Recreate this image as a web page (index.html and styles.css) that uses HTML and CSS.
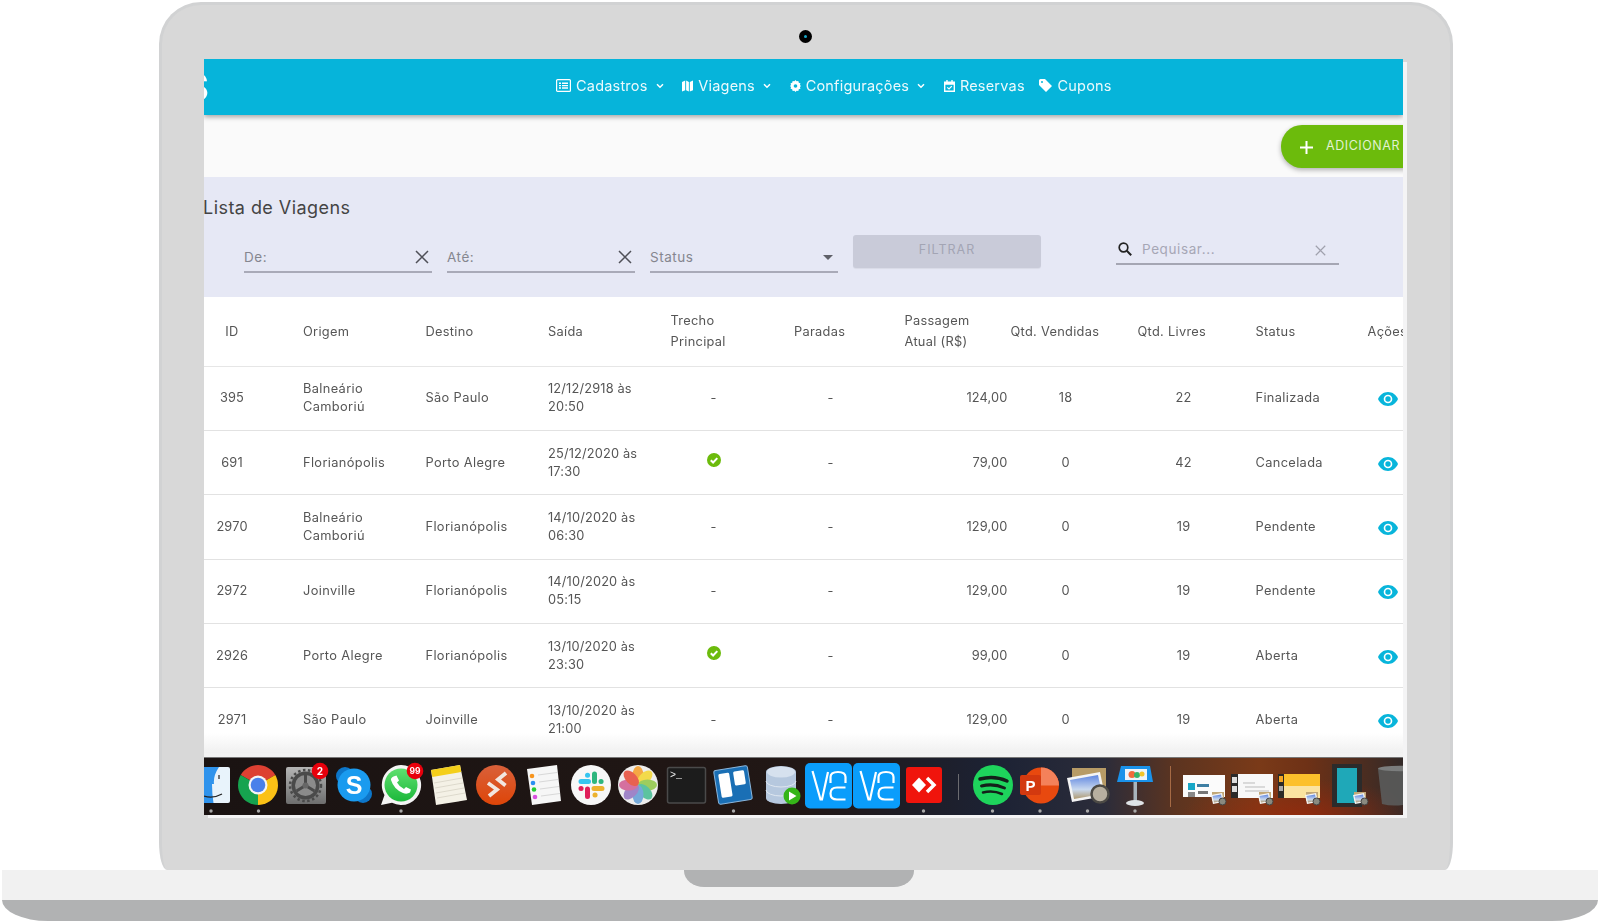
FILE: index.html
```html
<!DOCTYPE html>
<html lang="pt-BR">
<head>
<meta charset="utf-8">
<title>Lista de Viagens</title>
<link rel="stylesheet" href="styles.css">
</head>
<body>
<svg class="defs" width="0" height="0" aria-hidden="true">
  <defs>
    <symbol id="i-eye" viewBox="0 0 20 14"><path fill="currentColor" d="M10 0C5.5 0 1.8 2.8 0 7c1.8 4.200 5.500 7 10 7s8.200-2.800 10-7c-1.800-4.200-5.500-7-10-7z"/><circle cx="10" cy="7" r="4.300" fill="#fff"/><circle cx="10" cy="7" r="2.700" fill="currentColor"/></symbol>
    <symbol id="i-check" viewBox="0 0 14 14"><circle cx="7" cy="7" r="7" fill="#6cbb0c"/><path d="M3.800 7.200l2.300 2.300 4.200-4.400" fill="none" stroke="#fff" stroke-width="2"/></symbol>
    <symbol id="i-x" viewBox="0 0 14 14"><path d="M1 1l12 12M13 1L1 13" fill="none" stroke="currentColor" stroke-width="1.500"/></symbol>
    <symbol id="i-chev" viewBox="0 0 8 6"><path d="M1 1.200l3 3 3-3" fill="none" stroke="currentColor" stroke-width="1.500"/></symbol>
  </defs>
</svg>
<div class="laptop">
  <div class="lid">
    <div class="camera"><span class="lens"></span></div>
    <div class="app">
      <header class="topbar">
        <span class="logo">S</span>
        <nav class="nav">
          <a class="nav-item"><svg class="nav-ic wide" viewBox="0 0 15 13"><rect x=".6" y=".6" width="13.800" height="11.800" rx="1" fill="none" stroke="currentColor" stroke-width="1.200"/><path d="M3 3.500h2v1.400H3zM6 3.500h6v1.400H6zM3 5.900h2v1.400H3zM6 5.900h6v1.400H6zM3 8.300h2v1.400H3zM6 8.300h6v1.400H6z" fill="currentColor"/></svg>Cadastros<svg class="chev"><use href="#i-chev"/></svg></a>
          <a class="nav-item"><svg class="nav-ic" viewBox="0 0 12 13"><path d="M0 2l3.500-1.500V11L0 12.500zM4.500.5L7.500 2v10.500L4.500 11zM8.500 2L12 .5V11l-3.500 1.500z" fill="currentColor"/></svg>Viagens<svg class="chev"><use href="#i-chev"/></svg></a>
          <a class="nav-item"><svg class="nav-ic" viewBox="0 0 12 13"><path d="M6 0l1.200 1.400 1.900-.3.500 1.800 1.800.7-.5 1.800L12 6.500l-1.100 1.100.5 1.800-1.800.7-.5 1.800-1.900-.3L6 13l-1.200-1.400-1.900.3-.5-1.800-1.800-.7.500-1.800L0 6.500l1.100-1.100-.5-1.800 1.800-.7.5-1.800 1.900.3z" fill="currentColor"/><circle cx="6" cy="6.500" r="2" fill="#06b4da"/></svg>Configurações<svg class="chev"><use href="#i-chev"/></svg></a>
          <a class="nav-item"><svg class="nav-ic" viewBox="0 0 12 13"><path d="M2.500 0h1.500v1.500h4V0h1.500v1.500H12V13H0V1.500h2.500zM1.500 5v6.500h9V5z" fill="currentColor"/><path d="M3.500 8l2 1.800 3-3.200" fill="none" stroke="currentColor" stroke-width="1.300"/></svg>Reservas</a>
          <a class="nav-item tight"><svg class="nav-ic tag" viewBox="0 0 13 13"><path d="M0 1.500A1.500 1.500 0 0 1 1.500 0H6l7 7-6 6-7-7z" fill="currentColor"/><circle cx="3" cy="3" r="1" fill="#06b4da"/></svg>Cupons</a>
        </nav>
      </header>

      <div class="actions">
        <button class="fab"><svg class="plus" viewBox="0 0 13 13"><path d="M6.500 0v13M0 6.500h13" stroke="#fff" stroke-width="2"/></svg>ADICIONAR</button>
      </div>

      <section class="filters">
        <h1 class="title">Lista de Viagens</h1>
        <div class="filter-row">
          <label class="field"><span>De:</span><svg class="x"><use href="#i-x"/></svg></label>
          <label class="field"><span>Até:</span><svg class="x"><use href="#i-x"/></svg></label>
          <label class="field"><span>Status</span><i class="caret"></i></label>
          <button class="filter-btn">FILTRAR</button>
          <label class="search">
            <svg class="lens-ic" viewBox="0 0 14 14"><circle cx="5.500" cy="5.500" r="4.300" fill="none" stroke="#222" stroke-width="1.700"/><path d="M8.800 8.800l4.400 4.400" stroke="#222" stroke-width="2"/></svg>
            <span>Pequisar...</span>
            <svg class="x small"><use href="#i-x"/></svg>
          </label>
        </div>
      </section>

      <div class="table-wrap">
        <table class="grid">
          <colgroup><col class="c-id"><col class="c-txt"><col class="c-txt"><col class="c-txt"><col class="c-tr"><col class="c-par"><col class="c-val"><col class="c-ven"><col class="c-liv"><col class="c-st"><col class="c-ac"></colgroup>
          <thead>
            <tr>
              <th class="ctr">ID</th><th>Origem</th><th>Destino</th><th>Saída</th><th>Trecho<br>Principal</th>
              <th class="h-par">Paradas</th><th class="h-val">Passagem<br>Atual (R$)</th><th>Qtd. Vendidas</th><th class="h-liv">Qtd. Livres</th><th class="h-st">Status</th><th class="h-ac">Ações</th>
            </tr>
          </thead>
          <tbody>
            <tr><td class="ctr dig">395</td><td>Balneário<br>Camboriú</td><td>São Paulo</td><td class="dig">12/12/2918 às<br>20:50</td><td class="mid">-</td><td class="mid">-</td><td class="num dig">124,00</td><td class="mid dig">18</td><td class="mid dig">22</td><td class="st">Finalizada</td><td class="mid"><svg class="eye"><use href="#i-eye"/></svg></td></tr>
            <tr><td class="ctr dig">691</td><td>Florianópolis</td><td>Porto Alegre</td><td class="dig">25/12/2020 às<br>17:30</td><td class="mid"><svg class="ok"><use href="#i-check"/></svg></td><td class="mid">-</td><td class="num dig">79,00</td><td class="mid dig">0</td><td class="mid dig">42</td><td class="st">Cancelada</td><td class="mid"><svg class="eye"><use href="#i-eye"/></svg></td></tr>
            <tr><td class="ctr dig">2970</td><td>Balneário<br>Camboriú</td><td>Florianópolis</td><td class="dig">14/10/2020 às<br>06:30</td><td class="mid">-</td><td class="mid">-</td><td class="num dig">129,00</td><td class="mid dig">0</td><td class="mid dig">19</td><td class="st">Pendente</td><td class="mid"><svg class="eye"><use href="#i-eye"/></svg></td></tr>
            <tr><td class="ctr dig">2972</td><td>Joinville</td><td>Florianópolis</td><td class="dig">14/10/2020 às<br>05:15</td><td class="mid">-</td><td class="mid">-</td><td class="num dig">129,00</td><td class="mid dig">0</td><td class="mid dig">19</td><td class="st">Pendente</td><td class="mid"><svg class="eye"><use href="#i-eye"/></svg></td></tr>
            <tr><td class="ctr dig">2926</td><td>Porto Alegre</td><td>Florianópolis</td><td class="dig">13/10/2020 às<br>23:30</td><td class="mid"><svg class="ok"><use href="#i-check"/></svg></td><td class="mid">-</td><td class="num dig">99,00</td><td class="mid dig">0</td><td class="mid dig">19</td><td class="st">Aberta</td><td class="mid"><svg class="eye"><use href="#i-eye"/></svg></td></tr>
            <tr><td class="ctr dig">2971</td><td>São Paulo</td><td>Joinville</td><td class="dig">13/10/2020 às<br>21:00</td><td class="mid">-</td><td class="mid">-</td><td class="num dig">129,00</td><td class="mid dig">0</td><td class="mid dig">19</td><td class="st">Aberta</td><td class="mid"><svg class="eye"><use href="#i-eye"/></svg></td></tr>
          </tbody>
        </table>
      </div>

      <div class="dock">
        <svg class="dock-art" viewBox="204 758 1199 57" width="1199" height="57">
          <defs>
            <linearGradient id="g-set" x1="0" y1="0" x2="0" y2="1"><stop offset="0" stop-color="#b5b5b5"/><stop offset="1" stop-color="#6e6e6e"/></linearGradient>
            <linearGradient id="g-wa" x1="0" y1="0" x2="0" y2="1"><stop offset="0" stop-color="#5fe070"/><stop offset="1" stop-color="#1cb83a"/></linearGradient>
            <linearGradient id="g-or" x1="0" y1="0" x2="0" y2="1"><stop offset="0" stop-color="#d9603a"/><stop offset="1" stop-color="#de4508"/></linearGradient>
            <linearGradient id="g-sky" x1="0" y1="0" x2="0" y2="1"><stop offset="0" stop-color="#5f86e0"/><stop offset=".6" stop-color="#c8d8ef"/><stop offset="1" stop-color="#b09a70"/></linearGradient>
            <g id="mini">
              <rect x="1" y="0" width="12" height="9" fill="#c2a878"/>
              <path d="M0 3l11-2 2 9-11 2z" fill="#f4f4f4"/>
              <path d="M1.500 4l8.500-1.500 1.500 6.500-8.500 1.500z" fill="url(#g-sky)"/>
              <circle cx="11.500" cy="9.500" r="3.500" fill="#8a8a80" stroke="#444"/>
            </g>
            <g id="vnc" fill="none" stroke="#fff" stroke-width="2.200">
              <rect x="805" y="763" width="47" height="45.500" rx="5" fill="#0a9dfb" stroke="none"/>
              <path d="M812.500 771l8 28.500h1.500L828 772"/>
              <path d="M830.500 783v-6q0-5 7.500-5t7.500 5v6"/>
              <path d="M845.500 787.500H837q-6.500 0-6.500 6t6.500 6h8.500"/>
            </g>
          </defs>
          <!-- Finder -->
          <rect x="200" y="767" width="30" height="36" rx="2" fill="#e8f3fb"/>
          <path d="M200 767h19q-6 9-5 17h-2q0 10 1.500 19H200z" fill="#2f93ec"/>
          <path d="M219 775v4M204 796q9 3 18-2" fill="none" stroke="#222" stroke-width="1.200"/>
          <!-- Chrome -->
          <path d="M258 785L240.700 775A20 20 0 0 1 275.300 775z" fill="#dd4032"/>
          <path d="M258 785L275.300 775A20 20 0 0 1 258 805z" fill="#fbc116"/>
          <path d="M258 785L258 805A20 20 0 0 1 240.700 775z" fill="#16a34f"/>
          <circle cx="258" cy="785" r="9.500" fill="#f5f5f5"/><circle cx="258" cy="785" r="7.300" fill="#4a80ea"/>
          <!-- System settings -->
          <rect x="286" y="767" width="40" height="37" rx="2" fill="url(#g-set)"/>
          <circle cx="305.500" cy="785.500" r="14" fill="#4a4a4a"/>
          <circle cx="305.500" cy="785.500" r="15.500" fill="none" stroke="#4a4a4a" stroke-width="2.500" stroke-dasharray="2.500 2.500"/>
          <circle cx="305.500" cy="785.500" r="10.500" fill="#8b8b8b"/>
          <path d="M305.500 785.500V775M305.500 785.500l-9 5.500M305.500 785.500l9 5.500" stroke="#4a4a4a" stroke-width="3"/>
          <circle cx="305.500" cy="785.500" r="3" fill="#666"/>
          <circle cx="320" cy="771" r="8.300" fill="#e8000c"/>
          <text class="badge" x="320" y="774.500">2</text>
          <!-- Skype -->
          <circle cx="345" cy="776" r="9" fill="#0d76c9"/><circle cx="363" cy="794" r="9" fill="#0d76c9"/>
          <circle cx="354" cy="785" r="16.500" fill="#1a9bef"/>
          <text class="skype" x="354" y="794">S</text>
          <!-- WhatsApp -->
          <path d="M401 765a20 20 0 1 1-9 37.800L381 805l3.500-10A20 20 0 0 1 401 765z" fill="#f4f4f4"/>
          <circle cx="401" cy="785" r="16.500" fill="url(#g-wa)"/>
          <path d="M393.500 776.500l3-1 2.500 5-2 2q2.500 4.500 7 6.500l2-2 5 2.500-1 3q-3 2-7 .5-9-3.500-12-13-.5-2 2.500-3.500z" fill="#fff"/>
          <circle cx="415" cy="771" r="8.300" fill="#e8000c"/>
          <text class="badge small" x="415" y="774">99</text>
          <!-- Notes -->
          <path d="M431 770l29-5 7 35-31 5z" fill="#f4f1e6"/>
          <path d="M431 770l29-5 1.300 7-29 5z" fill="#f4cf1a"/>
          <path d="M434 783l28-5M435 788l28-5M436 793l28-5M437 798l28-5" stroke="#ddd9cc"/>
          <!-- Remote desktop -->
          <circle cx="496" cy="785" r="20" fill="url(#g-or)"/>
          <path d="M488 783l9 6.500-8 6.500M506 773l-8 6.500 7.500 6" fill="none" stroke="#f2e6e0" stroke-width="3.800"/>
          <!-- Reminders -->
          <path d="M527 769l30-4 4 36-29 4z" fill="#f6f6f6"/>
          <path d="M538 775l19-2.500M539 782l19-2.500M540 789l19-2.500M541 796l19-2.500" stroke="#d8d8d8"/>
          <circle cx="532" cy="776" r="2.300" fill="#f7941d"/><circle cx="533" cy="783" r="2.300" fill="#2a8ff0"/><circle cx="534" cy="789.500" r="2.300" fill="#22cc33"/><circle cx="535" cy="797" r="2.300" fill="#d84fe0"/>
          <!-- Slack -->
          <circle cx="591" cy="785" r="20" fill="#f7f7f7"/>
          <g fill="none" stroke-width="5" stroke-linecap="round">
            <path d="M581 781.500h7.500M587.500 775.200h.1" stroke="#36c5f0"/>
            <path d="M594.500 774v7.500M601 781.500h.1" stroke="#2eb67d"/>
            <path d="M594 788.500h8M595 795h.1" stroke="#ecb22e"/>
            <path d="M587.500 789v7.500M581 788.500h.1" stroke="#e01e5a"/>
          </g>
          <!-- Photos -->
          <circle cx="638" cy="785" r="20" fill="#ededed"/>
          <g class="petals">
            <ellipse cx="638" cy="775.500" rx="5.500" ry="9.500" fill="#f79a1f"/>
            <ellipse cx="638" cy="775.500" rx="5.500" ry="9.500" fill="#f5d628" transform="rotate(45 638 785)"/>
            <ellipse cx="638" cy="775.500" rx="5.500" ry="9.500" fill="#8cc63f" transform="rotate(90 638 785)"/>
            <ellipse cx="638" cy="775.500" rx="5.500" ry="9.500" fill="#3dbb8f" transform="rotate(135 638 785)"/>
            <ellipse cx="638" cy="775.500" rx="5.500" ry="9.500" fill="#5b9bd5" transform="rotate(180 638 785)"/>
            <ellipse cx="638" cy="775.500" rx="5.500" ry="9.500" fill="#8e6fc0" transform="rotate(225 638 785)"/>
            <ellipse cx="638" cy="775.500" rx="5.500" ry="9.500" fill="#d0558f" transform="rotate(270 638 785)"/>
            <ellipse cx="638" cy="775.500" rx="5.500" ry="9.500" fill="#e8432e" transform="rotate(315 638 785)"/>
          </g>
          <!-- Terminal -->
          <rect x="667.500" y="767.500" width="38" height="35.500" rx="2" fill="#1c1c1c" stroke="#4a4a4a" stroke-width="1.500"/>
          <text class="term" x="670" y="778">&gt;_</text>
          <!-- Trello -->
          <g transform="rotate(-9 733 785)">
            <rect x="716" y="768" width="34" height="34" rx="2" fill="#1a6fb5" stroke="#8ab6dc"/>
            <rect x="720" y="772" width="11" height="24" rx="1.500" fill="#fff"/>
            <rect x="735" y="772" width="11" height="14" rx="1.500" fill="#fff"/>
          </g>
          <!-- Database -->
          <path d="M766 772a15 6 0 0 1 30 0v26a15 6 0 0 1-30 0z" fill="#b6c8de"/>
          <path d="M766 781a15 6 0 0 0 30 0M766 790a15 6 0 0 0 30 0" fill="none" stroke="#dfe7f0"/>
          <ellipse cx="781" cy="772" rx="14" ry="5.500" fill="#d6e1ee"/>
          <circle cx="792" cy="796" r="8.500" fill="#35b518"/>
          <path d="M789 791.500l7.500 4.500-7.500 4.500z" fill="#fff"/>
          <!-- VNC -->
          <use href="#vnc"/><use href="#vnc" x="48"/>
          <!-- AnyDesk -->
          <rect x="906" y="767" width="36" height="36" rx="3" fill="#f0140c"/>
          <path d="M919 777.500l7 7.500-7 7.500-7-7.500z" fill="#fff"/>
          <path d="M927 778l7 7-7 7" fill="none" stroke="#fff" stroke-width="3.500"/>
          <path d="M958.500 774v26" stroke="#6b6b70"/>
          <!-- Spotify -->
          <circle cx="993" cy="785" r="20" fill="#1ed45c"/>
          <path d="M980 779q14-4 27 2" fill="none" stroke="#14201a" stroke-width="3.500" stroke-linecap="round"/>
          <path d="M981.500 786q12-3 23 2" fill="none" stroke="#14201a" stroke-width="3" stroke-linecap="round"/>
          <path d="M983 792.500q10-2.500 19 1.500" fill="none" stroke="#14201a" stroke-width="2.500" stroke-linecap="round"/>
          <!-- PowerPoint -->
          <circle cx="1041" cy="785.500" r="18" fill="#e8490f"/>
          <path d="M1041 785.500v-18a18 18 0 0 1 18 18z" fill="#f4815a"/>
          <rect x="1020" y="775" width="21" height="20" rx="2" fill="#d3390f"/>
          <text class="ppt" x="1030.500" y="791">P</text>
          <!-- Preview -->
          <rect x="1072" y="768" width="34" height="27" fill="#b79b66"/>
          <path d="M1067 778l33-6 5 24-33 6z" fill="#f4f4f4"/>
          <path d="M1070 780l28-5 4 19-28 5z" fill="url(#g-sky)"/>
          <circle cx="1100" cy="794" r="8.500" fill="#b8b0a0" stroke="#4c4a45" stroke-width="2.500"/>
          <!-- Keynote -->
          <path d="M1121 766h29l3 16h-36z" fill="#1a92ea"/>
          <rect x="1125" y="769" width="22" height="11" fill="#eef4fb"/>
          <circle cx="1132" cy="774.500" r="3.500" fill="#f06a3c"/><circle cx="1137" cy="775" r="3" fill="#36b26b"/><circle cx="1142" cy="774" r="2.500" fill="#f4c52b"/>
          <rect x="1133.500" y="782" width="3.500" height="19" fill="#a8b4bc"/>
          <ellipse cx="1135" cy="803" rx="9" ry="3" fill="#dfe3e6"/>
          <path d="M1170.500 766v41" stroke="#a66a44"/>
          <!-- Thumbnails -->
          <rect x="1183" y="775" width="42" height="22" fill="#fbfbfb"/>
          <rect x="1188" y="783" width="7" height="7" fill="#17a7c7"/><rect x="1188" y="792" width="7" height="5" fill="#888"/>
          <rect x="1197" y="784" width="12" height="3" fill="#3f7fa3"/><rect x="1198" y="791" width="10" height="3" fill="#777"/>
          <use href="#mini" x="1211" y="792"/>
          <rect x="1231" y="774" width="42" height="24" fill="#f8f8f8"/><rect x="1231" y="774" width="7" height="24" fill="#2a2a2a"/>
          <rect x="1232" y="777" width="5" height="6" fill="#ddd"/><rect x="1232" y="786" width="5" height="6" fill="#ddd"/>
          <path d="M1243 783h12M1245 787h20M1245 791h24" stroke="#bbb"/>
          <use href="#mini" x="1258" y="792"/>
          <rect x="1278" y="774" width="42" height="24" fill="#fcc02b"/><rect x="1278" y="774" width="6" height="24" fill="#2c2a26"/>
          <rect x="1279" y="776" width="4" height="6" fill="#f5a623"/><rect x="1279" y="786" width="4" height="5" fill="#aaa"/>
          <path d="M1284 786l36 0v12h-36z" fill="#fbe3a0"/>
          <use href="#mini" x="1305" y="792"/>
          <rect x="1332" y="764" width="30" height="43" fill="#2b2b2b"/>
          <rect x="1337" y="768" width="20" height="35" fill="#1fa8b8"/>
          <use href="#mini" x="1353" y="792"/>
          <!-- Trash -->
          <path d="M1378 769l4 35q12 3 26 0v-35z" fill="#5c5e5e" opacity=".85"/>
          <ellipse cx="1400" cy="768.500" rx="22" ry="2.800" fill="#7b7d7d"/>
          <!-- Running dots -->
          <g fill="#a9a9a9">
            <circle cx="211" cy="811" r="1.700"/><circle cx="258.500" cy="811" r="1.700"/><circle cx="401" cy="811" r="1.700"/><circle cx="733.500" cy="811" r="1.700"/><circle cx="923.500" cy="811" r="1.700"/><circle cx="992.500" cy="811" r="1.700"/><circle cx="1040" cy="811" r="1.700"/><circle cx="1087.500" cy="811" r="1.700"/><circle cx="1135" cy="811" r="1.700"/>
          </g>
        </svg>
      </div>
    </div>
  </div>
  <div class="base">
    <div class="notch"></div>
  </div>
  <div class="base-foot"></div>
</div>
</body>
</html>
```

FILE: styles.css
```css
* { box-sizing: border-box; }
html, body { margin: 0; padding: 0; background: #fff; }
body { width: 1600px; height: 922px; overflow: hidden; font-family: Inter, "Liberation Sans", sans-serif; color: #555; }
.defs { position: absolute; }

.laptop { display: flex; flex-direction: column; align-items: flex-start; padding-top: 2px; }
.lid { width: 1294px; height: 868px; margin-left: 159px; background: #d8d8d8; border: 3px solid #d1d2d3; border-bottom: 0; border-radius: 42px 42px 8px 8px / 42px 42px 28px 28px; }
.camera { width: 13px; height: 13px; margin: 25px 0 0 637px; background: #000; border-radius: 50%; display: flex; align-items: center; justify-content: center; }
.lens { width: 3px; height: 3px; border-radius: 50%; background: #16a8c8; }

.app { width: 1199px; height: 756px; margin: 16px 0 0 42px; display: flex; flex-direction: column; overflow: hidden; background: #fff; box-shadow: 4px 3px 0 #f4f4f5; filter: blur(.35px); }

.topbar { flex: none; height: 56px; background: #06b4da; box-shadow: 0 2px 5px rgba(0,0,0,.35); position: relative; z-index: 2; display: flex; align-items: center; overflow: visible; color: #fff; }
.logo { position: absolute; left: -20px; top: 6px; font: 700 38px/44px Inter, sans-serif; color: #fff; }
.nav { display: flex; align-items: center; gap: 18.750px; padding-left: 352px; margin-top: -3px; }
.nav-item { display: flex; align-items: center; gap: 5px; font-size: 14.500px; font-weight: 400; color: rgba(255,255,255,.92); letter-spacing: .2px; }
.nav-item.tight { margin-left: -4px; }
.nav-ic { width: 11px; height: 12px; fill: currentColor; color: #fff; }
.nav-ic.wide { width: 15px; height: 13px; }
.nav-ic.tag { width: 13px; height: 13px; }
.chev { width: 8px; height: 6px; margin-left: 3px; color: #fff; }

.actions { flex: none; height: 62px; background: #fafafa; display: flex; justify-content: flex-end; padding-top: 10px; overflow: hidden; }
.fab { width: 126px; height: 43px; margin-right: -4px; border: 0; border-radius: 21px 0 0 21px; background: #6cbb0c; color: rgba(255,255,255,.82); font: 400 12.500px Inter, sans-serif; letter-spacing: .55px; display: flex; align-items: center; padding: 0 0 2px 19px; gap: 13px; box-shadow: 0 2px 5px rgba(0,0,0,.3); }
.plus { width: 13px; height: 13px; margin-top: 4px; }

.filters { flex: none; height: 120px; background: #e6e8f5; }
.title { margin: 0 0 0 -1px; padding: 20px 0 0 0; font-size: 18px; line-height: 22px; font-weight: 400; color: #444; letter-spacing: .45px; }
.filter-row { display: flex; align-items: flex-start; padding: 16px 0 0 40px; }
.field { width: 188px; height: 30px; margin: 8px 15px 0 0; border-bottom: 2px solid #a9aab8; display: flex; align-items: center; justify-content: space-between; font-size: 13.500px; color: #85868f; letter-spacing: .55px; }
.x { width: 14px; height: 14px; color: #4f5058; margin-right: 3px; }
.caret { width: 0; height: 0; border-left: 5px solid transparent; border-right: 5px solid transparent; border-top: 5px solid #5f6068; margin-right: 5px; }
.filter-btn { width: 188px; height: 33px; margin-right: 75px; border: 0; border-radius: 3px; background: #c9cbd9; color: #a3a5b4; font: 400 12.500px Inter, sans-serif; letter-spacing: 1px; padding: 0 0 4px; box-shadow: 0 1px 1px rgba(0,0,0,.06); }
.search { width: 223px; height: 30px; border-bottom: 2px solid #a5a6b3; display: flex; align-items: center; font-size: 13.500px; color: #a6a7b5; letter-spacing: .6px; }
.lens-ic { width: 14px; height: 14px; margin: 0 10px 0 2px; }
.x.small { width: 11px; height: 11px; color: #a0a1ad; margin: 2px 13px 0 auto; }

.table-wrap { flex: 1; min-height: 0; position: relative; overflow: hidden; background: #fff; }
.table-wrap::after { content: ""; position: absolute; left: 0; right: 0; bottom: 0; height: 24px; background: linear-gradient(rgba(243,243,243,0), rgba(241,241,241,.9) 70%, #f3f3f3); border-bottom: 1px solid #777; }
.grid { width: 1210px; table-layout: fixed; border-collapse: collapse; font-size: 12.800px; color: #555; letter-spacing: .36px; }
.c-id { width: 99px; } .c-txt { width: 122.500px; } .c-tr { width: 86px; } .c-par { width: 148px; } .c-val { width: 106px; } .c-ven { width: 110px; } .c-liv { width: 126px; } .c-st { width: 114px; } .c-ac { width: 54px; }
th { height: 69px; padding: 0; font-weight: 400; text-align: left; line-height: 21px; letter-spacing: .3px; white-space: nowrap; border-bottom: 1px solid #e6e6e6; }
td { height: 64.350px; padding: 0; line-height: 18px; border-bottom: 1px solid #e2e2e2; white-space: nowrap; }
td.dig { letter-spacing: .16px; }
th.ctr, td.ctr { text-align: center; padding-right: 43px; }
.mid { text-align: center; }
.num { text-align: right; padding-right: 3px; }
.st { padding-left: 9px; }
.h-par { padding-left: 37.500px; }
.h-val { padding-left: 0; }
.h-liv { padding-left: 17px; }
.h-st { padding-left: 9px; }
.h-ac { padding-left: 7px; }
.eye { width: 20px; height: 14px; color: #08b5db; display: block; margin: 2px auto 0; }
.ok { width: 14px; height: 14px; display: block; margin: -5px auto 0; }

.dock { flex: none; height: 57px; overflow: hidden; background: radial-gradient(120px 40px at 1096px 60px, rgba(160,40,10,.7), rgba(160,40,10,0)), linear-gradient(90deg, #1a1312 0, #211715 50%, #1c2234 66%, #2b2c3a 75%, #5c3420 81%, #7a3a18 88%, #6e3116 92%, #332a28 100%); }
.dock-art { display: block; }
.badge { fill: #fff; font: 700 10px Inter, sans-serif; text-anchor: middle; }
.badge.small { font-size: 8.500px; }
.skype { fill: #fff; font: 700 25px "Liberation Sans", sans-serif; text-anchor: middle; }
.term { fill: #eee; font: 400 10px "Liberation Mono", monospace; }
.ppt { fill: #fff; font: 700 15px "Liberation Sans", sans-serif; text-anchor: middle; }
.petals { opacity: .82; }

.base { width: 1596px; height: 30px; margin-left: 2px; background: #f1f1f1; display: flex; justify-content: center; }
.notch { width: 230px; height: 17px; margin-right: 2px; background: #b1b2b3; border-radius: 0 0 20px 20px / 0 0 16px 16px; }
.base-foot { width: 1596px; height: 21px; margin-left: 2px; background: #b1b2b3; border-radius: 0 0 46px 46px / 0 0 21px 21px; }
```
